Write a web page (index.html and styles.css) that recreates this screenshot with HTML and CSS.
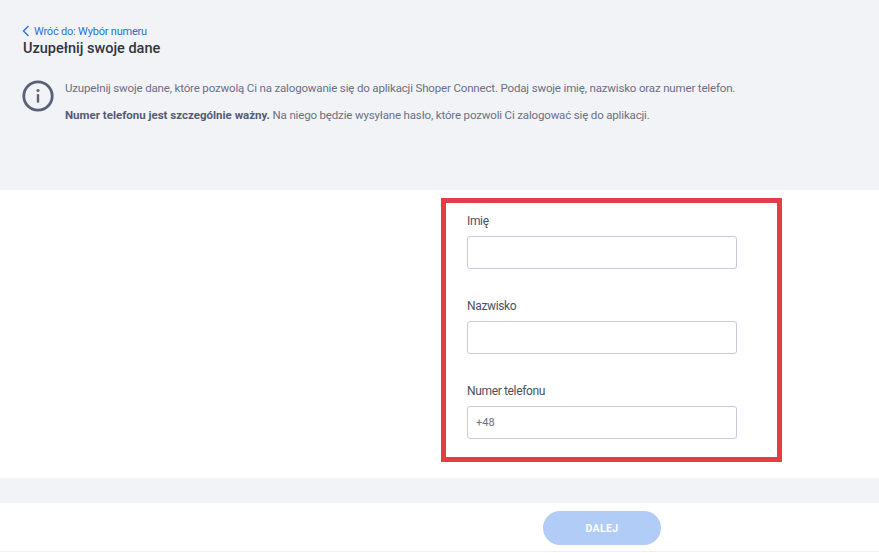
FILE: index.html
```html
<!DOCTYPE html>
<html lang="pl">
  <head>
    <meta charset="UTF-8" />
    <title>Uzupełnij swoje dane</title>
    <link rel="stylesheet" href="styles.css">
  </head>
  <body>
    <div class="top">
      <a class="back" href="#">
        <svg class="backIcon" width="8" height="12" viewBox="0 0 8 12"><path d="M6.5 1 1.5 6l5 5" fill="none" stroke="#2f6fd6" stroke-width="1.4"/></svg>
        Wróć do: Wybór numeru
      </a>
      <h1>Uzupełnij swoje dane</h1>
      <div class="info">
        <svg class="infoIcon" width="32" height="32" viewBox="0 0 32 32">
          <circle cx="16" cy="16" r="14.2" fill="none" stroke="#596079" stroke-width="2.8"/>
          <circle cx="16" cy="10.6" r="1.5" fill="#596079"/>
          <path d="M16 14.2v8.4" stroke="#596079" stroke-width="2.4"/>
        </svg>
        <div class="infoText">
          <p>Uzupełnij swoje dane, które pozwolą Ci na zalogowanie się do aplikacji Shoper Connect. Podaj swoje imię, nazwisko oraz numer telefon.</p>
          <p><b>Numer telefonu jest szczególnie ważny.</b> Na niego będzie wysyłane hasło, które pozwoli Ci zalogować się do aplikacji.</p>
        </div>
      </div>
    </div>

    <div class="main">
      <form class="formBox">
        <div class="field">
          <label for="imie">Imię</label>
          <input type="text" id="imie" />
        </div>
        <div class="field">
          <label for="nazwisko">Nazwisko</label>
          <input type="text" id="nazwisko" />
        </div>
        <div class="field">
          <label for="telefon">Numer telefonu</label>
          <input type="text" id="telefon" value="+48" />
        </div>
      </form>
    </div>

    <div class="strip"></div>

    <div class="footer">
      <button class="next" type="button">DALEJ</button>
    </div>
  </body>
</html>
```

FILE: styles.css
```css
* {
  box-sizing: border-box;
}

html,
body {
  height: 100%;
}

body {
  margin: 0;
  background: #fff;
  color: #2f3542;
  font-family: Roboto, "Noto Sans", sans-serif;
  overflow: hidden;
}

.top {
  height: 190px;
  padding: 22px 22px 0;
  background: #f2f3f7;
}

.back {
  display: flex;
  align-items: center;
  gap: 4px;
  height: 18px;
  color: #2f6fd6;
  font-size: 11px;
  letter-spacing: -0.2px;
  text-decoration: none;
}

h1 {
  margin: 0 0 0 1px;
  font-size: 14.5px;
  line-height: 18px;
  font-weight: 500;
}

.info {
  display: flex;
  gap: 11px;
  margin-top: 22px;
}

.infoIcon {
  flex: none;
}

.infoText p {
  margin: 0 0 11px;
  color: #6a7085;
  font-size: 11.5px;
  letter-spacing: -0.16px;
  line-height: 16px;
}

.infoText b {
  color: #555b72;
  letter-spacing: 0;
}

.main {
  height: 288px;
  padding: 8px 0 0 441px;
}

.formBox {
  width: 341px;
  height: 264px;
  padding: 9px 21px 0;
  border: 5px solid #e63c46;
}

.field {
  margin-bottom: 28px;
}

label {
  display: block;
  height: 21px;
  margin-bottom: 3px;
  color: #4a5064;
  font-size: 12px;
  letter-spacing: -0.35px;
  line-height: 18px;
}

input {
  display: block;
  width: 270px;
  height: 33px;
  padding: 0 8px;
  border: 1px solid #c5cbe0;
  border-radius: 3px;
  color: #6a7085;
  font: inherit;
  font-size: 11px;
  outline: none;
}

.strip {
  height: 25px;
  background: #f2f3f7;
}

.footer {
  display: flex;
  height: 49px;
  padding: 8px 0 0 543px;
  border-bottom: 1px solid #eeeff3;
}

.next {
  width: 118px;
  height: 34px;
  border: 0;
  border-radius: 17px;
  background: #b1ccf6;
  color: #fff;
  font: inherit;
  font-size: 10.5px;
  font-weight: 700;
  letter-spacing: 0.4px;
}
```
